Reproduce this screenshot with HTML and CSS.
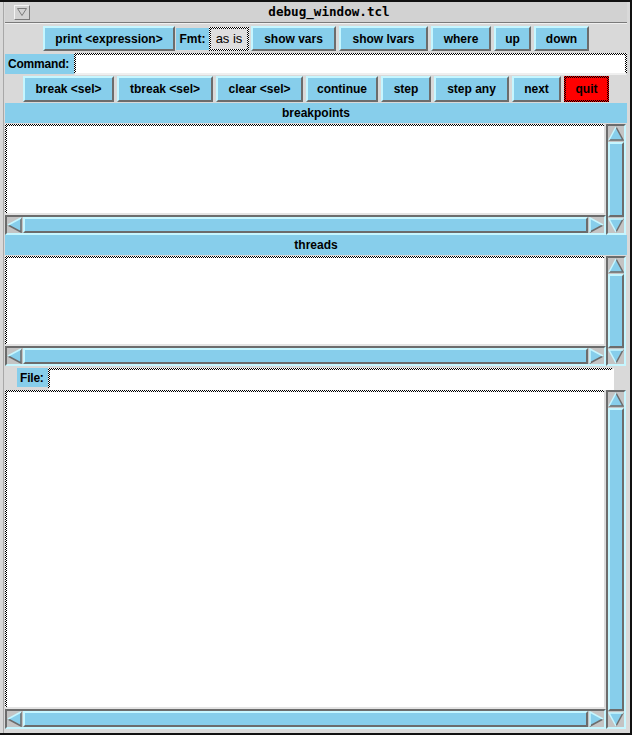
FILE: index.html
```html
<!DOCTYPE html>
<html>
<head>
<meta charset="utf-8">
<title>debug_window.tcl</title>
<link rel="stylesheet" href="styles.css">
</head>
<body>
<div class="win">
  <div class="titlebar">
    <div class="menubox">
      <div class="menubtn">
        <svg width="10" height="8" viewBox="0 0 10 8"><polygon points="0.5,0.5 9.5,0.5 5,7.5" fill="none" stroke="#7a7a7a" stroke-width="1"/></svg>
      </div>
    </div>
    <div class="title">debug_window.tcl</div>
  </div>
  <div class="tsep"></div>
  <div class="client">
    <div class="row row1">
      <div class="btn b-print">print &lt;expression&gt;</div>
      <div class="fmt">
        <div class="fmtlbl">Fmt:</div>
        <div class="asis">as is</div>
      </div>
      <div class="btn b-vars">show vars</div>
      <div class="btn b-lvars">show lvars</div>
      <div class="btn b-where">where</div>
      <div class="btn b-up">up</div>
      <div class="btn b-down">down</div>
    </div>
    <div class="cmdrow">
      <div class="cmdlbl">Command:</div>
      <div class="entry"></div>
    </div>
    <div class="row row3">
      <div class="btn b-break">break &lt;sel&gt;</div>
      <div class="btn b-tbreak">tbreak &lt;sel&gt;</div>
      <div class="btn b-clear">clear &lt;sel&gt;</div>
      <div class="btn b-cont">continue</div>
      <div class="btn b-step">step</div>
      <div class="btn b-stepany">step any</div>
      <div class="btn b-next">next</div>
      <div class="btn quit">quit</div>
    </div>
    <div class="hdr">breakpoints</div>
    <div class="pane p1">
      <div class="main">
        <div class="list"></div>
        <div class="hs">
          <svg class="arrow" viewBox="0 0 16 16"><polygon points="1,8 14,1 14,15" fill="#87ceeb"/><polyline points="1,8 14,15 14,1" fill="none" stroke="#6c6c6c" stroke-width="1.5"/><polyline points="14,1 1,8" fill="none" stroke="#c6f6ff" stroke-width="1.5"/></svg>
          <div class="thumb"></div>
          <svg class="arrow" viewBox="0 0 16 16"><polygon points="15,8 2,1 2,15" fill="#87ceeb"/><polyline points="15,8 2,15" fill="none" stroke="#6c6c6c" stroke-width="1.5"/><polyline points="2,15 2,1 15,8" fill="none" stroke="#c6f6ff" stroke-width="1.5"/></svg>
        </div>
      </div>
      <div class="vs">
        <svg class="arrow" viewBox="0 0 16 16"><polygon points="8,1 15,14 1,14" fill="#87ceeb"/><polyline points="8,1 15,14 1,14" fill="none" stroke="#6c6c6c" stroke-width="1.5"/><polyline points="1,14 8,1" fill="none" stroke="#c6f6ff" stroke-width="1.5"/></svg>
        <div class="thumb"></div>
        <svg class="arrow" viewBox="0 0 16 16"><polygon points="8,15 1,2 15,2" fill="#87ceeb"/><polyline points="15,2 8,15" fill="none" stroke="#6c6c6c" stroke-width="1.5"/><polyline points="8,15 1,2 15,2" fill="none" stroke="#c6f6ff" stroke-width="1.5"/></svg>
      </div>
    </div>
    <div class="hdr">threads</div>
    <div class="pane p2">
      <div class="main">
        <div class="list"></div>
        <div class="hs">
          <svg class="arrow" viewBox="0 0 16 16"><polygon points="1,8 14,1 14,15" fill="#87ceeb"/><polyline points="1,8 14,15 14,1" fill="none" stroke="#6c6c6c" stroke-width="1.5"/><polyline points="14,1 1,8" fill="none" stroke="#c6f6ff" stroke-width="1.5"/></svg>
          <div class="thumb"></div>
          <svg class="arrow" viewBox="0 0 16 16"><polygon points="15,8 2,1 2,15" fill="#87ceeb"/><polyline points="15,8 2,15" fill="none" stroke="#6c6c6c" stroke-width="1.5"/><polyline points="2,15 2,1 15,8" fill="none" stroke="#c6f6ff" stroke-width="1.5"/></svg>
        </div>
      </div>
      <div class="vs">
        <svg class="arrow" viewBox="0 0 16 16"><polygon points="8,1 15,14 1,14" fill="#87ceeb"/><polyline points="8,1 15,14 1,14" fill="none" stroke="#6c6c6c" stroke-width="1.5"/><polyline points="1,14 8,1" fill="none" stroke="#c6f6ff" stroke-width="1.5"/></svg>
        <div class="thumb"></div>
        <svg class="arrow" viewBox="0 0 16 16"><polygon points="8,15 1,2 15,2" fill="#87ceeb"/><polyline points="15,2 8,15" fill="none" stroke="#6c6c6c" stroke-width="1.5"/><polyline points="8,15 1,2 15,2" fill="none" stroke="#c6f6ff" stroke-width="1.5"/></svg>
      </div>
    </div>
    <div class="filerow">
      <div class="filelbl">File:</div>
      <div class="fentry"></div>
    </div>
    <div class="pane p3">
      <div class="main">
        <div class="list"></div>
        <div class="hs">
          <svg class="arrow" viewBox="0 0 16 16"><polygon points="1,8 14,1 14,15" fill="#87ceeb"/><polyline points="1,8 14,15 14,1" fill="none" stroke="#6c6c6c" stroke-width="1.5"/><polyline points="14,1 1,8" fill="none" stroke="#c6f6ff" stroke-width="1.5"/></svg>
          <div class="thumb"></div>
          <svg class="arrow" viewBox="0 0 16 16"><polygon points="15,8 2,1 2,15" fill="#87ceeb"/><polyline points="15,8 2,15" fill="none" stroke="#6c6c6c" stroke-width="1.5"/><polyline points="2,15 2,1 15,8" fill="none" stroke="#c6f6ff" stroke-width="1.5"/></svg>
        </div>
      </div>
      <div class="vs">
        <svg class="arrow" viewBox="0 0 16 16"><polygon points="8,1 15,14 1,14" fill="#87ceeb"/><polyline points="8,1 15,14 1,14" fill="none" stroke="#6c6c6c" stroke-width="1.5"/><polyline points="1,14 8,1" fill="none" stroke="#c6f6ff" stroke-width="1.5"/></svg>
        <div class="thumb"></div>
        <svg class="arrow" viewBox="0 0 16 16"><polygon points="8,15 1,2 15,2" fill="#87ceeb"/><polyline points="15,2 8,15" fill="none" stroke="#6c6c6c" stroke-width="1.5"/><polyline points="8,15 1,2 15,2" fill="none" stroke="#c6f6ff" stroke-width="1.5"/></svg>
      </div>
    </div>
  </div>
</div>
</body>
</html>
```

FILE: styles.css
```css
* { box-sizing: border-box; }
html, body { margin: 0; padding: 0; background: #d9d9d9; }
body {
  font-family: "Liberation Sans", Arial, sans-serif;
  font-size: 12px;
  font-weight: bold;
  color: #000;
}
.win {
  width: 632px;
  height: 735px;
  display: flex;
  flex-direction: column;
  background: #d9d9d9;
  border-top: 2px solid #111;
  border-right: 2px solid #111;
  border-bottom: 2px solid #111;
  padding: 0 3px 4px 5px;
  box-shadow: inset 3px 0 0 #d9d9d9, inset 4px 0 0 #a8a8a8;
}
.titlebar {
  height: 20px;
  display: flex;
  background: #d2d2d2;
}
.menubox {
  width: 30px;
  display: flex;
  align-items: center;
  padding-left: 9px;
}
.menubtn {
  width: 16px;
  height: 15px;
  border: 1px solid;
  border-color: #f4f4f4 #7a7a7a #7a7a7a #f4f4f4;
  display: flex;
  align-items: center;
  justify-content: center;
}
.title {
  flex: 1;
  text-align: center;
  font-family: "DejaVu Sans Mono", "Liberation Mono", monospace;
  font-size: 12.6px;
  font-weight: bold;
  line-height: 20px;
  padding-right: 4px;
}
.tsep {
  height: 2px;
  border-top: 1px solid #7a7a7a;
  border-bottom: 1px solid #f0f0f0;
}
.client {
  flex: 1;
  display: flex;
  flex-direction: column;
}
.row {
  display: flex;
  align-items: center;
  gap: 3px;
}
.row1 { height: 29px; padding-left: 38px; }
.row3 { height: 28px; padding-left: 18px; }
.btn {
  height: 25px;
  display: flex;
  align-items: center;
  justify-content: center;
  background: #87ceeb;
  border: 2px solid;
  border-color: #c6f6ff #6c6c6c #6c6c6c #c6f6ff;
  white-space: nowrap;
}
.row3 .btn { height: 26px; }
.b-print { width: 132px; }
.b-vars { width: 85px; }
.b-lvars { width: 89px; }
.b-where { width: 60px; }
.b-up { width: 37px; }
.b-down { width: 55px; }
.b-break { width: 91px; }
.b-tbreak { width: 96px; }
.b-clear { width: 87px; }
.b-cont { width: 72px; }
.b-step { width: 50px; }
.b-stepany { width: 75px; }
.b-next { width: 49px; }
.quit {
  width: 45px;
  border: 2px solid transparent;
  background:
    linear-gradient(#ff0000, #ff0000) padding-box,
    repeating-conic-gradient(#000 0 25%, #ff0000 0 50%) 0 0 / 2px 2px border-box;
}
.fmt {
  display: flex;
  align-items: center;
  margin-left: -2px;
  margin-right: -1px;
}
.fmtlbl {
  width: 33px;
  height: 22px;
  background: #87ceeb;
  display: flex;
  align-items: center;
  justify-content: center;
}
.asis {
  width: 40px;
  height: 24px;
  border: 2px solid transparent;
  background:
    linear-gradient(#dedede, #dedede) padding-box,
    repeating-conic-gradient(#000 0 25%, #fff 0 50%) 0 0 / 2px 2px border-box;
  font-weight: normal;
  font-size: 13px;
  display: flex;
  align-items: center;
  justify-content: center;
}
.cmdrow {
  height: 22px;
  display: flex;
}
.cmdlbl {
  width: 69px;
  height: 20px;
  margin-top: 1px;
  background: #87ceeb;
  padding-left: 3px;
  letter-spacing: -0.2px;
  display: flex;
  align-items: center;
}
.entry {
  flex: 1;
  border: 2px solid transparent;
  border-bottom-color: #efefef;
  background:
    linear-gradient(#fff, #fff) padding-box,
    repeating-conic-gradient(#000 0 25%, #fff 0 50%) 0 0 / 2px 2px border-box;
}
.hdr {
  height: 20px;
  background: #87ceeb;
  display: flex;
  align-items: center;
  justify-content: center;
}
.pane {
  display: flex;
  margin-top: 1px;
  padding-right: 1px;
}
.p1 { height: 111px; }
.p2 { height: 110px; }
.p3 { height: 339px; margin-top: 0; }
.main {
  flex: 1;
  min-width: 0;
  display: flex;
  flex-direction: column;
}
.list {
  flex: 1;
  border: 2px solid;
  border-color: transparent #dcdcdc #e4e4e4 transparent;
  background:
    linear-gradient(#fff, #fff) padding-box,
    repeating-conic-gradient(#000 0 25%, #fff 0 50%) 0 0 / 2px 2px border-box;
}
.hs, .vs {
  display: flex;
  border: 2px solid;
  border-color: #6c6c6c #c6f6ff #c6f6ff #6c6c6c;
  background: #c4c4c4;
}
.hs { height: 20px; }
.vs { width: 20px; flex-direction: column; }
.arrow {
  width: 16px;
  height: 16px;
  flex: none;
  display: block;
  background: #c4c4c4;
}
.thumb {
  flex: 1;
  background: #87ceeb;
  border: 2px solid;
  border-color: #c6f6ff #6c6c6c #6c6c6c #c6f6ff;
}
.filerow {
  height: 24px;
  display: flex;
  align-items: flex-start;
  padding: 2px 13px 0 12px;
}
.filelbl {
  width: 31px;
  height: 19px;
  background: #87ceeb;
  padding-left: 3px;
  letter-spacing: -0.2px;
  display: flex;
  align-items: center;
}
.fentry {
  flex: 1;
  height: 22px;
  border: 2px solid transparent;
  border-right-color: #fff;
  border-bottom-color: #fff;
  background:
    linear-gradient(#fff, #fff) padding-box,
    repeating-conic-gradient(#000 0 25%, #fff 0 50%) 0 0 / 2px 2px border-box;
}
```
